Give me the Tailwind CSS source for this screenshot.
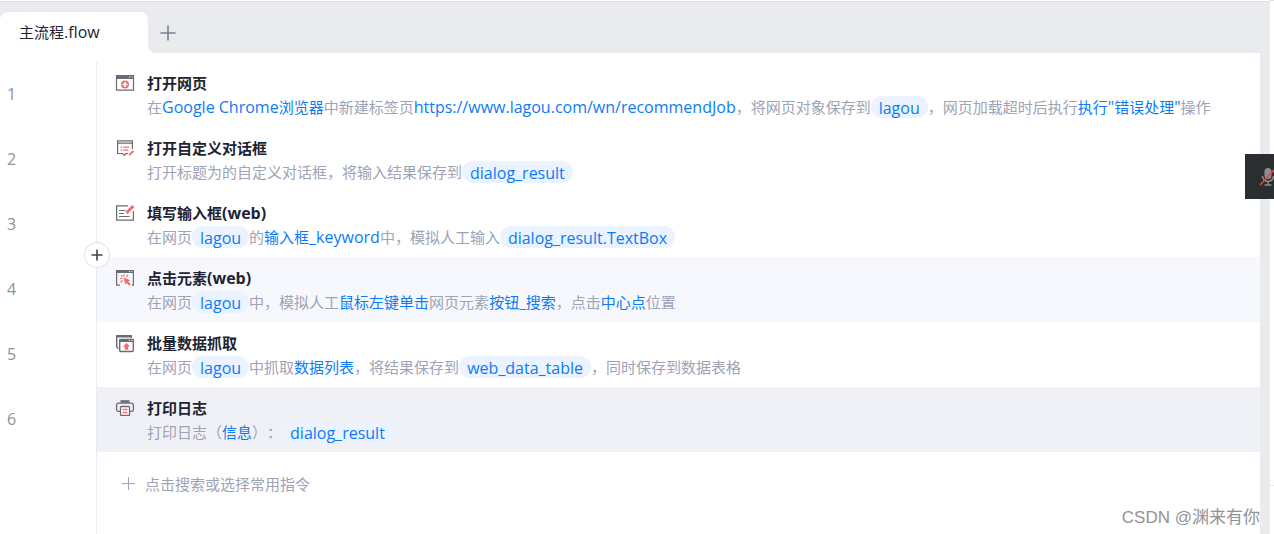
<!DOCTYPE html>
<html lang="zh-CN">
<head>
<meta charset="utf-8">
<meta name="viewport" content="width=device-width, initial-scale=1">
<title>主流程.flow</title>
<script src="https://cdn.jsdelivr.net/npm/@tailwindcss/browser@4"></script>
</head>
<body class="flex min-h-screen bg-white font-['Open_Sans','Noto_Sans_CJK_SC',sans-serif] text-[15px] leading-6 text-[#9ea3b5] [text-spacing-trim:space-all]">
<div class="flex min-w-0 flex-1 flex-col border-t border-white">
  <header class="flex h-[52px] border-t border-[#dfe0e4]" role="tablist">
    <div class="flex items-end bg-[#eaebef]">
      <button type="button" role="tab" aria-selected="true" class="flex h-[41px] w-[148px] items-center rounded-t-lg bg-white pb-0.5 pl-[19px] text-[#1d2433]">主流程<span class="text-base">.flow</span></button>
    </div>
    <div class="flex flex-1 items-end rounded-bl-lg bg-[#eaebef] pb-3 pl-3">
      <button type="button" aria-label="新建标签" class="text-[#7b8191]">
        <svg class="size-4" viewBox="0 0 16 16" fill="none" stroke="currentColor" stroke-width="1.6"><path d="M8 .5v15M.5 8h15"/></svg>
      </button>
    </div>
  </header>

  <main class="flex flex-1 flex-col border-r-[10px] border-[#eaebef] pt-[9px]">
    <ol class="relative whitespace-nowrap">
      <li class="flex h-[65px]">
        <span class="flex w-24 items-center pb-0.5 pl-[7px] text-base text-[#8e929d]">1</span>
        <div class="flex flex-1 gap-3 border-l border-[#ebecf1] pt-[9px] pl-[18px]">
          <svg class="mt-1 h-4 w-5 text-[#6b6b75]" viewBox="0 0 20 16" fill="none" stroke="currentColor"><path d="M1.5.8h17v14.4h-17z" stroke-width="1.2"/><path d="M1 0h18v4H1z" fill="currentColor" stroke="none"/><path d="M14 2h1M16.500 2h1" stroke="#fff"/><circle cx="10" cy="9.500" r="4" fill="#f56c6c" stroke="none"/><path d="M10 7v5M7.500 9.500h5" stroke="#fff" stroke-width="1.600"/></svg>
          <div>
            <h2 class="font-bold text-[#1d2433]">打开网页</h2>
            <p class="flex items-center">在<a href="#" class="text-[#0d7bf7]"><span class="text-base">Google Chrome</span>浏览器</a>中新建标签页<a href="#" class="text-base text-[#0d7bf7]">https://www.lagou.com/wn/recommendJob</a>，将网页对象保存到<a href="#" class="h-[22px] rounded-full bg-[#eaf3ff] px-2 text-base text-[#0d7bf7]">lagou</a>，网页加载超时后执行<a href="#" class="text-[#0d7bf7]">执行<span class="text-base">"</span>错误处理<span class="text-base">"</span></a>操作</p>
          </div>
        </div>
      </li>
      <li class="flex h-[65px]">
        <span class="flex w-24 items-center pb-0.5 pl-[7px] text-base text-[#8e929d]">2</span>
        <div class="flex flex-1 gap-3 border-l border-[#ebecf1] pt-[9px] pl-[18px]">
          <svg class="mt-1 h-4 w-5 text-[#6b6b75]" viewBox="0 0 20 16" fill="none" stroke="currentColor" stroke-width="1.200"><path d="M17.400 9V.800H2.600v12.700h5.200l1.600 1.900 1.600-1.900h2M2.600 3.200h14.800"/><path d="M5.500 7.200h1.500M8.200 7.200h6M5.500 10.200h1.500M8.200 10.200h5" stroke="#f56c6c"/><path d="m14 15 4.500-4" stroke="#f56c6c" stroke-width="1.700"/></svg>
          <div>
            <h2 class="font-bold text-[#1d2433]">打开自定义对话框</h2>
            <p class="flex items-center">打开标题为的自定义对话框，将输入结果保存到<a href="#" class="h-[22px] rounded-full bg-[#eaf3ff] px-2 text-base text-[#0d7bf7]">dialog_result</a></p>
          </div>
        </div>
      </li>
      <li class="flex h-[65px]">
        <span class="flex w-24 items-center pb-0.5 pl-[7px] text-base text-[#8e929d]">3</span>
        <div class="flex flex-1 gap-3 border-l border-[#ebecf1] pt-[9px] pl-[18px]">
          <svg class="mt-1 h-4 w-5 text-[#6b6b75]" viewBox="0 0 20 16" fill="none" stroke="currentColor" stroke-width="1.200"><path d="M13 .800H1.600v14.400h16.800V6"/><path d="M4 5.500h6.500M4 8.500h5M4 11.500h10.500"/><path d="m11.500 8 6.800-7" stroke="#f56c6c" stroke-width="3"/></svg>
          <div>
            <h2 class="font-bold text-[#1d2433]">填写输入框<span class="text-base leading-6">(web)</span></h2>
            <p class="flex items-center">在网页<a href="#" class="h-[22px] rounded-full bg-[#eaf3ff] px-2 text-base text-[#0d7bf7]">lagou</a>的<a href="#" class="text-[#0d7bf7]">输入框<span class="text-base">_keyword</span></a>中，模拟人工输入<a href="#" class="h-[22px] rounded-full bg-[#eaf3ff] px-2 text-base text-[#0d7bf7]">dialog_result.TextBox</a></p>
          </div>
        </div>
      </li>
      <li class="flex h-[65px]">
        <span class="flex w-24 items-center pb-0.5 pl-[7px] text-base text-[#8e929d]">4</span>
        <div class="flex flex-1 gap-3 border-l border-[#ebecf1] bg-[#f7f8fd] pt-[9px] pl-[18px]">
          <svg class="mt-1 h-4 w-5 text-[#6b6b75]" viewBox="0 0 20 16" fill="none" stroke="currentColor"><path d="M5 15.200H1.600V1h16.800v14.200H17" stroke-width="1.200"/><path d="M1 0h18v3H1z" fill="currentColor" stroke="none"/><path d="M14 1.500h1M16.500 1.500h1" stroke="#fff"/><path d="m8.500 7.500 6.800 2.800-2.100 1.200 2.600 2.700-1.500 1.500-2.700-2.700-1.100 1.800z" fill="#f56c6c" stroke="none"/><path d="M9 4.300v2.200M5 8.500h2.500M6 5.500l1.500 1.300M13 5l-1.500 1.600M5.500 12.300l2-1.800" stroke="#f56c6c" stroke-width="1.200"/></svg>
          <div>
            <h2 class="font-bold text-[#1d2433]">点击元素<span class="text-base leading-6">(web)</span></h2>
            <p class="flex items-center">在网页<a href="#" class="h-[22px] rounded-full bg-[#eaf3ff] px-2 text-base text-[#0d7bf7]">lagou</a>中，模拟人工<a href="#" class="text-[#0d7bf7]">鼠标左键单击</a>网页元素<a href="#" class="text-[#0d7bf7]">按钮_搜索</a>，点击<a href="#" class="text-[#0d7bf7]">中心点</a>位置</p>
          </div>
        </div>
      </li>
      <li class="flex h-[65px]">
        <span class="flex w-24 items-center pb-0.5 pl-[7px] text-base text-[#8e929d]">5</span>
        <div class="flex flex-1 gap-3 border-l border-[#ebecf1] pt-[9px] pl-[18px]">
          <svg class="mt-1 h-[18px] w-5 text-[#6b6b75]" viewBox="0 0 20 18" fill="none" stroke="currentColor" stroke-width="1.400"><path d="M3.500 13.300A2 2 0 0 1 1.700 11.300V1h14.600v2"/><path d="M1 1.200Q1 0 2.200 0h13.600Q17 0 17 1.200V2.500H1z" fill="currentColor" stroke="none"/><rect x="4.700" y="4.500" width="13.600" height="12" rx="1"/><path d="M4 4h15v3H4z" fill="currentColor" stroke="none"/><path d="M14 5.500h1M16.500 5.500h1" stroke="#fff" stroke-width="1"/><path d="m11.500 8 3.500 3.500h-1.700v3.200H9.700v-3.200H8z" fill="#f56c6c" stroke="none"/></svg>
          <div>
            <h2 class="font-bold text-[#1d2433]">批量数据抓取</h2>
            <p class="flex items-center">在网页<a href="#" class="h-[22px] rounded-full bg-[#eaf3ff] px-2 text-base text-[#0d7bf7]">lagou</a>中抓取<a href="#" class="text-[#0d7bf7]">数据列表</a>，将结果保存到<a href="#" class="h-[22px] rounded-full bg-[#eaf3ff] px-2 text-base text-[#0d7bf7]">web_data_table</a>，同时保存到数据表格</p>
          </div>
        </div>
      </li>
      <li class="flex h-[65px]">
        <span class="flex w-24 items-center pb-0.5 pl-[7px] text-base text-[#8e929d]">6</span>
        <div class="flex flex-1 gap-3 border-l border-[#ebecf1] bg-[#f0f1f6] pt-[9px] pl-[18px]">
          <svg class="mt-1 h-4 w-5 text-[#6b6b75]" viewBox="0 0 20 16" fill="none" stroke="currentColor" stroke-width="1.300"><path d="M5.500.200h9v2.600h-9z" fill="currentColor" stroke="none"/><path d="M5 11.300H3.200a1.600 1.600 0 0 1-1.600-1.600V4.800a1.600 1.600 0 0 1 1.600-1.600h13.600a1.600 1.600 0 0 1 1.600 1.600v4.900a1.600 1.600 0 0 1-1.600 1.600H15"/><rect x="5.500" y="6.500" width="9" height="9" rx="1" fill="#fff"/><path d="M7.500 9.500h5M7.500 12.500h5" stroke="#f56c6c"/></svg>
          <div>
            <h2 class="font-bold text-[#1d2433]">打印日志</h2>
            <p class="flex items-center">打印日志（<a href="#" class="text-[#0d7bf7]">信息</a>）：<a href="#" class="h-[22px] rounded-full bg-[#eaf3ff] px-2 text-base text-[#0d7bf7]">dialog_result</a></p>
          </div>
        </div>
      </li>
      <li class="absolute top-[180px] left-[84px]">
        <button type="button" aria-label="插入指令" class="flex size-[26px] items-center justify-center rounded-full border border-[#dedfe3] bg-white text-[#3f4452]">
          <svg class="size-3" viewBox="0 0 12 12" fill="none" stroke="currentColor" stroke-width="1.600"><path d="M6 .500v11M.500 6h11"/></svg>
        </button>
      </li>
    </ol>

    <div class="ml-24 flex flex-1 items-start justify-between border-l border-[#ebecf1] pl-6">
      <button type="button" class="mt-5 flex items-center gap-2">
        <svg class="size-4" viewBox="0 0 16 16" fill="none" stroke="currentColor"><path d="M7.500 1v13M1 7.500h13"/></svg>
        点击搜索或选择常用指令
      </button>
      <p class="self-end pb-1 font-['Liberation_Sans','Noto_Sans_CJK_SC',sans-serif] text-[17px] text-[#929292]">CSDN @渊来有你</p>
    </div>
  </main>
</div>
<aside class="flex w-1 flex-col justify-end border-t border-[#dfe0e4] pb-12"><hr class="border-[#e8e9ed]"></aside>
<button type="button" aria-label="麦克风已静音" class="absolute top-[154px] right-0 flex h-[45px] w-[29px] items-center overflow-hidden bg-[#2b2e31] pl-3.5">
  <svg class="size-[18px] shrink-0" viewBox="0 0 18 18" fill="none" stroke="#8b8d90" stroke-width="1.500"><rect x="5.500" y="0" width="7" height="11" rx="3.500" fill="#8b8d90" stroke="none"/><path d="M3.500 8a5.500 5.500 0 0 0 11 0M9 13.500V17M5.500 17h7"/><path d="M1 17 16 1" stroke="#e5483f"/></svg>
</button>
</body>
</html>
